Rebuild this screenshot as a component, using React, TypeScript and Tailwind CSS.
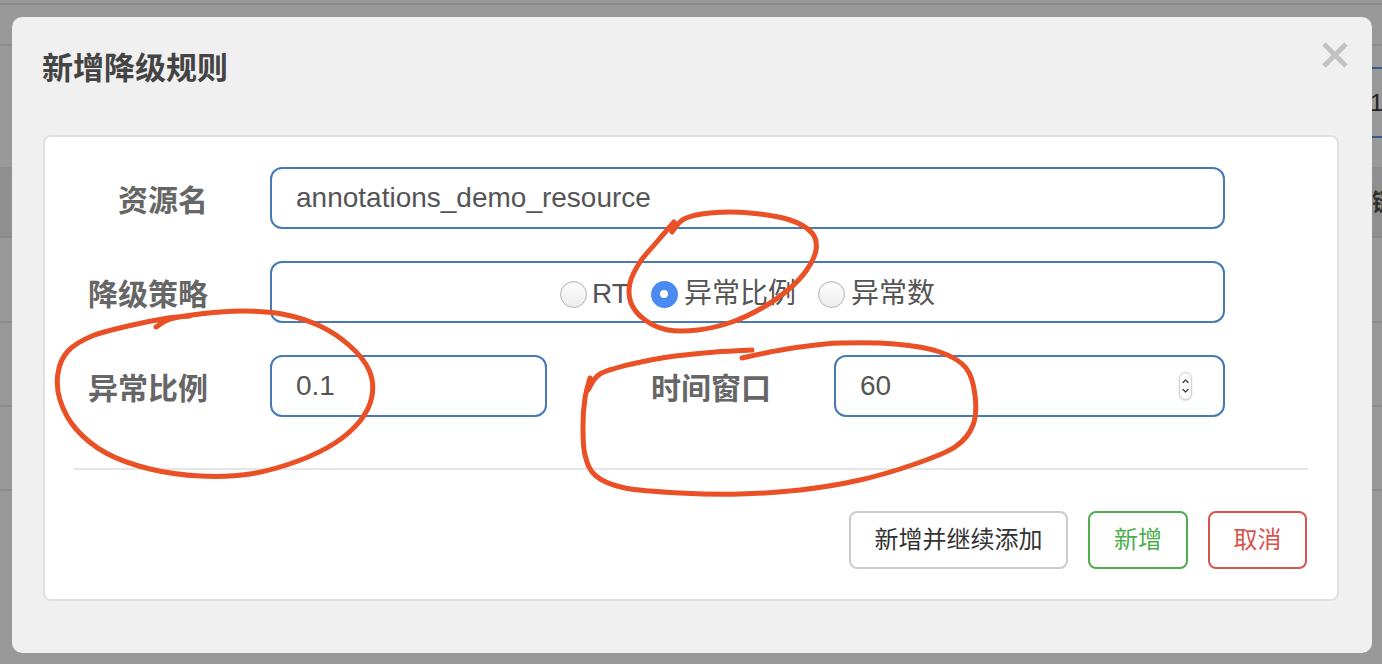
import React from "react";

const FONT = '"Liberation Sans", "Noto Sans CJK SC", Arial, sans-serif';

function Radio({ checked }: { checked?: boolean }) {
  if (checked) {
    return (
      <span className="flex h-[27px] w-[27px] shrink-0 items-center justify-center rounded-full bg-[#4a8af2]">
        <span className="h-[8px] w-[8px] rounded-full bg-white" />
      </span>
    );
  }
  return (
    <span className="h-[27px] w-[27px] shrink-0 rounded-full border border-[#b4b4b4] bg-gradient-to-b from-white to-[#ececec] shadow-[inset_0_1px_1px_rgba(0,0,0,0.08)]" />
  );
}

function Spinner() {
  return (
    <span className="flex h-[28px] w-[13px] flex-col items-center justify-center rounded-full border border-[#d0d0d0] bg-white shadow-[0_1px_2px_rgba(0,0,0,0.15)]">
      <svg width="9" height="24" viewBox="0 0 9 24" fill="none" stroke="#444" strokeWidth="1.4" strokeLinecap="round" strokeLinejoin="round">
        <path d="M2 8.5 L4.5 6 L7 8.5" />
        <path d="M2 15.5 L4.5 18 L7 15.5" />
      </svg>
    </span>
  );
}

type P = [number, number];

function smooth(points: P[]): string {
  if (points.length < 2) return "";
  let d = `M${points[0][0]} ${points[0][1]}`;
  for (let i = 0; i < points.length - 1; i++) {
    const p0 = points[i - 1] || points[i];
    const p1 = points[i];
    const p2 = points[i + 1];
    const p3 = points[i + 2] || p2;
    const c1x = p1[0] + (p2[0] - p0[0]) / 6;
    const c1y = p1[1] + (p2[1] - p0[1]) / 6;
    const c2x = p2[0] - (p3[0] - p1[0]) / 6;
    const c2y = p2[1] - (p3[1] - p1[1]) / 6;
    d += ` C${c1x.toFixed(1)} ${c1y.toFixed(1)} ${c2x.toFixed(1)} ${c2y.toFixed(1)} ${p2[0]} ${p2[1]}`;
  }
  return d;
}

const loop1: P[] = [
  [672, 232], [684, 219], [710, 213], [750, 213], [790, 220], [812, 233], [816, 250],
  [806, 271], [788, 290], [762, 308], [732, 322], [698, 330], [668, 330], [645, 320],
  [631, 303], [630, 283], [640, 262], [655, 244], [667, 230], [674, 222],
];

const loop2: P[] = [
  [156, 327], [170, 319], [200, 314], [240, 311], [282, 314], [320, 326], [350, 346],
  [369, 370], [372, 396], [360, 421], [335, 443], [298, 461], [250, 474], [200, 476],
  [150, 469], [106, 453], [76, 429], [60, 400], [58, 373], [68, 351], [92, 336],
  [128, 326], [168, 318], [190, 316],
];

const loop3a: P[] = [[752, 350], [715, 352], [675, 356], [632, 364], [600, 374], [588, 390]];

const loop3b: P[] = [
  [742, 358], [770, 352], [800, 347], [840, 343], [895, 344], [940, 352], [966, 368],
  [975, 395], [973, 425], [955, 447], [915, 464], [860, 480], [800, 490], [740, 494],
  [680, 493], [625, 488], [596, 476], [585, 455], [583, 425], [585, 398], [590, 378],
];

export default function App() {
  return (
    <div
      className="relative h-[664px] w-[1382px] overflow-hidden bg-[#999999]"
      style={{ fontFamily: FONT }}
    >
      {/* dimmed page behind the modal */}
      <div className="flex h-full w-full flex-col">
        <div className="h-[5px] border-b-2 border-[#8a8a8a]" />
        <div className="h-[41px] border-b-2 border-[#8e8e8e]" />
        <div className="flex h-[123px] justify-end border-b-2 border-[#8e8e8e]">
          <div className="mt-[21px] flex h-[71px] w-[16px] items-center border-y-2 border-[#38598a] pl-[4px] text-[24px] leading-none text-[#222]">
            1
          </div>
        </div>
        <div className="flex h-[69px] items-center justify-end border-b-2 border-[#8a8a8a] bg-[#8f8f8f]">
          <span className="w-[10px] overflow-hidden whitespace-nowrap text-[24px] font-bold text-[#2f2f2f]">链</span>
        </div>
        <div className="h-[85px] border-b-2 border-[#8e8e8e]" />
        <div className="h-[84px] border-b-2 border-[#8e8e8e]" />
        <div className="h-[84px] border-b-2 border-[#8e8e8e]" />
      </div>

      {/* modal */}
      <div className="absolute left-[12px] top-[17px] flex h-[636px] w-[1360px] flex-col rounded-[10px] bg-[#f0f0f0]">
        <div className="flex h-[118px] items-start justify-between pl-[30px] pr-[24px]">
          <h4 className="mt-[35px] text-[31px] font-bold leading-[34px] text-[#444]">新增降级规则</h4>
          <svg className="mt-[25px]" width="26" height="26" viewBox="0 0 26 26" stroke="#c2c2c2" strokeWidth="5">
            <path d="M2 2 L24 24 M24 2 L2 24" />
          </svg>
        </div>

        <div className="ml-[31px] h-[466px] w-[1296px] rounded-[8px] border-2 border-[#e1e1e1] bg-white px-[29px] pt-[30px]">
          {/* row 1 */}
          <div className="flex h-[62px] items-center gap-[62px]">
            <div className="w-[134px] pt-[4px] text-right text-[30px] font-bold text-[#666]">资源名</div>
            <div className="flex h-[62px] w-[955px] items-center rounded-[12px] border-2 border-[#4679b5] pl-[24px] text-[28px] text-[#555]">
              annotations_demo_resource
            </div>
          </div>

          {/* row 2 */}
          <div className="mt-[32px] flex h-[62px] items-center gap-[62px]">
            <div className="w-[134px] pt-[4px] text-right text-[30px] font-bold text-[#666]">降级策略</div>
            <div className="flex h-[62px] w-[955px] items-center justify-center gap-[22px] rounded-[12px] border-2 border-[#4679b5] pt-[4px] text-[28px] text-[#555]">
              <span className="flex items-center gap-[5px]">
                <Radio />
                <span>RT</span>
              </span>
              <span className="flex items-center gap-[6px]">
                <Radio checked />
                <span>异常比例</span>
              </span>
              <span className="flex items-center gap-[6px]">
                <Radio />
                <span>异常数</span>
              </span>
            </div>
          </div>

          {/* row 3 */}
          <div className="mt-[32px] flex h-[62px] items-center">
            <div className="w-[134px] pt-[4px] text-right text-[30px] font-bold text-[#666]">异常比例</div>
            <div className="ml-[62px] flex h-[62px] w-[277px] items-center rounded-[12px] border-2 border-[#4679b5] pl-[24px] text-[28px] text-[#555]">
              0.1
            </div>
            <div className="w-[224px] pt-[4px] text-right text-[30px] font-bold text-[#666]">时间窗口</div>
            <div className="ml-[63px] flex h-[62px] w-[391px] items-center justify-between rounded-[12px] border-2 border-[#4679b5] pl-[24px] pr-[31px] text-[28px] text-[#555]">
              <span>60</span>
              <Spinner />
            </div>
          </div>

          <div className="mt-[51px] h-[2px] w-full bg-[#e6e6e6]" />

          <div className="mt-[41px] flex justify-end gap-[20px] pr-[1px]">
            <button className="flex h-[58px] w-[219px] items-center justify-center rounded-[8px] border-2 border-[#cccccc] bg-white text-[24px] text-[#333]">
              新增并继续添加
            </button>
            <button className="flex h-[58px] w-[100px] items-center justify-center rounded-[8px] border-2 border-[#4cae4c] bg-white text-[24px] text-[#4cae4c]">
              新增
            </button>
            <button className="flex h-[58px] w-[99px] items-center justify-center rounded-[8px] border-2 border-[#d9534f] bg-white text-[24px] text-[#d9534f]">
              取消
            </button>
          </div>
        </div>
      </div>

      {/* hand-drawn red annotations over the screenshot */}
      <svg
        className="pointer-events-none absolute left-0 top-0"
        width="1382"
        height="664"
        viewBox="0 0 1382 664"
        fill="none"
        stroke="#ea5026"
        strokeWidth="5"
        strokeLinecap="round"
        strokeLinejoin="round"
      >
        <path d={smooth(loop1)} />
        <path d={smooth(loop2)} />
        <path d={smooth(loop3a)} />
        <path d={smooth(loop3b)} />
      </svg>
    </div>
  );
}
